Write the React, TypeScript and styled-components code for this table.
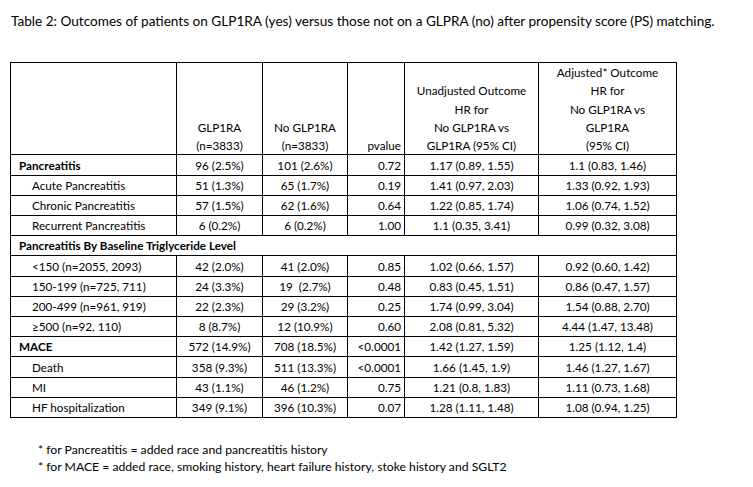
import styled, { createGlobalStyle } from 'styled-components';

const GlobalStyle = createGlobalStyle`
  body {
    margin: 0;
    background: #fff;
    color: #000;
    font-family: Lato, "Open Sans", sans-serif;
  }
`;

type Row =
  | { kind: 'section'; label: string }
  | { kind: 'main' | 'sub'; label: string; glp: string; noGlp: string; p: string; unadj: string; adj: string };

const rows: Row[] = [
  { kind: 'main', label: 'Pancreatitis', glp: '96 (2.5%)', noGlp: '101 (2.6%)', p: '0.72', unadj: '1.17 (0.89, 1.55)', adj: '1.1 (0.83, 1.46)' },
  { kind: 'sub', label: 'Acute Pancreatitis', glp: '51 (1.3%)', noGlp: '65 (1.7%)', p: '0.19', unadj: '1.41 (0.97, 2.03)', adj: '1.33 (0.92, 1.93)' },
  { kind: 'sub', label: 'Chronic Pancreatitis', glp: '57 (1.5%)', noGlp: '62 (1.6%)', p: '0.64', unadj: '1.22 (0.85, 1.74)', adj: '1.06 (0.74, 1.52)' },
  { kind: 'sub', label: 'Recurrent Pancreatitis', glp: '6 (0.2%)', noGlp: '6 (0.2%)', p: '1.00', unadj: '1.1 (0.35, 3.41)', adj: '0.99 (0.32, 3.08)' },
  { kind: 'section', label: 'Pancreatitis By Baseline Triglyceride Level' },
  { kind: 'sub', label: '<150 (n=2055, 2093)', glp: '42 (2.0%)', noGlp: '41 (2.0%)', p: '0.85', unadj: '1.02 (0.66, 1.57)', adj: '0.92 (0.60, 1.42)' },
  { kind: 'sub', label: '150-199 (n=725, 711)', glp: '24 (3.3%)', noGlp: '19\u00a0 (2.7%)', p: '0.48', unadj: '0.83 (0.45, 1.51)', adj: '0.86 (0.47, 1.57)' },
  { kind: 'sub', label: '200-499 (n=961, 919)', glp: '22 (2.3%)', noGlp: '29 (3.2%)', p: '0.25', unadj: '1.74 (0.99, 3.04)', adj: '1.54 (0.88, 2.70)' },
  { kind: 'sub', label: '\u2265500 (n=92, 110)', glp: '8 (8.7%)', noGlp: '12 (10.9%)', p: '0.60', unadj: '2.08 (0.81, 5.32)', adj: '4.44 (1.47, 13.48)' },
  { kind: 'main', label: 'MACE', glp: '572 (14.9%)', noGlp: '708 (18.5%)', p: '<0.0001', unadj: '1.42 (1.27, 1.59)', adj: '1.25 (1.12, 1.4)' },
  { kind: 'sub', label: 'Death', glp: '358 (9.3%)', noGlp: '511 (13.3%)', p: '<0.0001', unadj: '1.66 (1.45, 1.9)', adj: '1.46 (1.27, 1.67)' },
  { kind: 'sub', label: 'MI', glp: '43 (1.1%)', noGlp: '46 (1.2%)', p: '0.75', unadj: '1.21 (0.8, 1.83)', adj: '1.11 (0.73, 1.68)' },
  { kind: 'sub', label: 'HF hospitalization', glp: '349 (9.1%)', noGlp: '396 (10.3%)', p: '0.07', unadj: '1.28 (1.11, 1.48)', adj: '1.08 (0.94, 1.25)' },
];

const widths = [166, 86, 85, 57, 134, 138];

const App = () => {
  return (
    <Page>
      <GlobalStyle />
      <Title>
        Table 2: Outcomes of patients on GLP1RA (yes) versus those not on a GLPRA (no) after propensity score (PS) matching.
      </Title>
      <Table>
        <colgroup>
          {widths.map((w, i) => (
            <Col key={i} $w={w} />
          ))}
        </colgroup>
        <thead>
          <HeadRow>
            <HeadCell />
            <HeadCell>
              GLP1RA
              <br />
              (n=3833)
            </HeadCell>
            <HeadCell>
              No GLP1RA
              <br />
              (n=3833)
            </HeadCell>
            <HeadCell $align="right">pvalue</HeadCell>
            <HeadCell>
              Unadjusted Outcome
              <br />
              HR for
              <br />
              No GLP1RA vs
              <br />
              GLP1RA (95% CI)
            </HeadCell>
            <HeadCell>
              Adjusted* Outcome
              <br />
              HR for
              <br />
              No GLP1RA vs
              <br />
              GLP1RA
              <br />
              (95% CI)
            </HeadCell>
          </HeadRow>
        </thead>
        <tbody>
          {rows.map((r) =>
            r.kind === 'section' ? (
              <BodyRow key={r.label}>
                <SectionCell colSpan={6}>{r.label}</SectionCell>
              </BodyRow>
            ) : (
              <BodyRow key={r.label}>
                <LabelCell $kind={r.kind}>{r.label}</LabelCell>
                <Cell>{r.glp}</Cell>
                <Cell>{r.noGlp}</Cell>
                <Cell $align="right">{r.p}</Cell>
                <Cell>{r.unadj}</Cell>
                <Cell>{r.adj}</Cell>
              </BodyRow>
            )
          )}
        </tbody>
      </Table>
      <Notes>
        <li>* for Pancreatitis = added race and pancreatitis history</li>
        <li>* for MACE = added race, smoking history, heart failure history, stoke history and SGLT2</li>
      </Notes>
    </Page>
  );
};

export default App;

const Page = styled.div`
  padding: 12px 0 0 11px;
  display: flex;
  flex-direction: column;
  align-items: flex-start;
`;

const Title = styled.div`
  font-size: 13.6px;
  line-height: 18px;
  white-space: nowrap;
`;

const Table = styled.table`
  margin: 32px 0 0 -1px;
  border-collapse: collapse;
  table-layout: fixed;
  width: 666px;
  font-size: 11.7px;
`;

const Col = styled.col<{ $w: number }>`
  width: ${(p) => p.$w}px;
`;

const HeadRow = styled.tr`
  height: 86px;
`;

const BodyRow = styled.tr`
  height: 20.2px;
`;

const Cell = styled.td<{ $align?: 'center' | 'right' }>`
  border: 1px solid #000;
  padding: 0 3px 2px;
  text-align: ${(p) => p.$align ?? 'center'};
  vertical-align: bottom;
  white-space: nowrap;
  line-height: 15px;
`;

const HeadCell = styled(Cell).attrs({ as: 'th' })`
  font-weight: normal;
  line-height: 18.3px;
  padding-bottom: 0;
`;

const LabelCell = styled(Cell)<{ $kind: 'main' | 'sub' }>`
  text-align: left;
  padding-left: ${(p) => (p.$kind === 'sub' ? 21 : 8)}px;
  font-weight: ${(p) => (p.$kind === 'main' ? 700 : 400)};
`;

const SectionCell = styled(Cell)`
  text-align: left;
  padding-left: 8px;
  font-weight: 700;
`;

const Notes = styled.ul`
  list-style: none;
  margin: 23px 0 0 27px;
  padding: 0;
  font-size: 12.2px;
  line-height: 17.4px;
`;
